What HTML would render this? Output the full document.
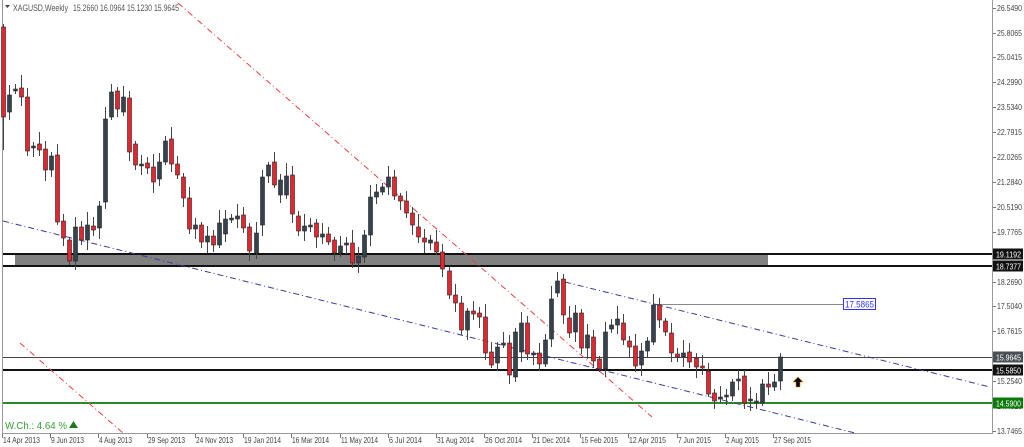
<!DOCTYPE html>
<html><head><meta charset="utf-8"><style>
html,body{margin:0;padding:0;background:#fff;width:1024px;height:447px;overflow:hidden}
svg{display:block;font-family:"Liberation Sans",sans-serif}
</style></head><body>
<svg id="s" width="1024" height="447" viewBox="0 0 1024 447" xmlns="http://www.w3.org/2000/svg">
<rect x="0" y="0" width="1024" height="447" fill="#fff"/>
<line x1="2.5" y1="0" x2="2.5" y2="434" stroke="#999" stroke-width="1"/>
<line x1="992.5" y1="0" x2="992.5" y2="434" stroke="#999" stroke-width="1"/>
<line x1="2" y1="433.5" x2="993" y2="433.5" stroke="#999" stroke-width="1"/>
<rect x="15" y="254" width="753" height="12" fill="#808080"/>
<line x1="3" y1="254" x2="992" y2="254" stroke="#111" stroke-width="2"/>
<line x1="3" y1="266" x2="992" y2="266" stroke="#111" stroke-width="2"/>
<line x1="3" y1="357.5" x2="992" y2="357.5" stroke="#444" stroke-width="1"/>
<line x1="3" y1="370" x2="992" y2="370" stroke="#111" stroke-width="2"/>
<line x1="3" y1="403" x2="992" y2="403" stroke="#2a8a2a" stroke-width="2"/>
<line x1="655" y1="304.5" x2="843" y2="304.5" stroke="#888" stroke-width="1"/>
<line x1="178" y1="3" x2="652" y2="417" stroke="#e84040" stroke-width="1" stroke-dasharray="6,3,1,3"/>
<line x1="20" y1="343" x2="123" y2="433" stroke="#e84040" stroke-width="1" stroke-dasharray="6,3,1,3"/>
<line x1="3" y1="221" x2="855" y2="433" stroke="#3a3aa0" stroke-width="1" stroke-dasharray="6,3,1,3"/>
<line x1="565" y1="282" x2="990" y2="387" stroke="#3a3aa0" stroke-width="1" stroke-dasharray="6,3,1,3"/>
<g id="c"></g>
<rect x="843.5" y="298.5" width="32" height="11" fill="#fff" stroke="#3333ff"/>
<text x="845" y="307.5" font-size="9" fill="#3333ff" textLength="29" lengthAdjust="spacingAndGlyphs">17.5865</text>
<path d="M798 377 L803 382 L800 382 L800 387 L796 387 L796 382 L793 382 Z" fill="#000" stroke="#e08a00" stroke-width="0.6"/>
<path d="M5 5 L10 5 L7.5 8 Z" fill="#444"/>
<text x="13" y="11" font-size="9" fill="#555" textLength="55" lengthAdjust="spacingAndGlyphs">XAGUSD,Weekly</text>
<text x="73" y="11" font-size="9" fill="#555" textLength="106" lengthAdjust="spacingAndGlyphs">15.2660 16.0964 15.1230 15.9645</text>
<text x="5" y="429" font-size="10" fill="#33a033" textLength="62" lengthAdjust="spacingAndGlyphs">W.Ch.: 4.64 %</text>
<path d="M69 428 L73.5 421 L78 428 Z" fill="#1a7a1a"/>
<g id="ax" font-size="8.5" fill="#444"></g>
</svg>
<script>
var NS="http://www.w3.org/2000/svg";
function el(p,t,a,txt){var e=document.createElementNS(NS,t);for(var k in a)e.setAttribute(k,a[k]);if(txt)e.textContent=txt;p.appendChild(e);return e;}
var d=[[3,27,117,24,150],[9,112,95],[15,90,90],[21,88,97],[27,97,151],[33,147,147],[39,144,150],[45,149,170],[51,170,156],[57,155,222],
[63,221,238],[69,240,261],[75,261,227],[81,227,240],[87,240,225],[93,226,230],[99,228,206],[105,202,119],[111,117,92],[117,91,109],
[123,112,97],[129,98,152],[135,144,165],[141,165,165],[147,163,168],[153,167,182],[159,179,162],[165,162,141],[171,139,164],[177,164,175],
[183,177,198],[189,198,229],[195,229,225],[201,225,242],[207,242,236],[213,236,245],[219,245,223],[225,234,219],[231,219,219],[237,219,216],
[243,215,228],[249,227,251],[256,253,233],[262,225,177],[268,176,165],[274,162,185],[280,195,180],[286,195,176],[292,175,214],[298,216,231],
[304,231,226],[310,226,226],[316,223,237],[322,237,234],[328,234,242],[334,240,253],[340,253,246],[346,245,243],[352,243,263],[358,263,256],
[364,257,235],[370,235,197],[376,197,192],[382,192,187],[388,187,177],[394,177,196],[400,196,201],[406,201,213],[412,213,225],[418,227,237],
[424,238,242],[430,243,240],[436,242,252],[442,252,269],[449,271,295],[455,295,303],[461,303,330],[467,330,311],[473,311,314],[479,313,317],
[485,317,353],[491,352,365],[497,363,347],[503,344,344],[509,343,375],[515,377,332],[521,352,323],[527,323,354],[533,354,354],[539,353,364],
[545,364,340],[551,339,299],[557,293,281],[563,279,315],[569,318,333],[575,332,313],[581,313,348],[587,348,335],[593,337,361],[599,359,369],
[605,369,332],[611,329,325],[617,325,319],[623,323,340],[629,341,347],[635,346,366],[641,365,351],[647,351,341],[653,342,305],[659,305,320],
[665,321,332],[671,333,353],[677,354,357],[683,357,353],[689,352,362],[696,358,367],[702,367,368],[708,371,394],[714,393,401],[720,399,397],
[726,396,396],[732,396,382],[738,380,380],[744,376,403],[750,400,400],[756,402,402],[762,403,384],[768,384,387],[774,387,382],[780,381,357]];
var g=document.getElementById("c");
for(var i=0;i<d.length;i++){var c=d[i],x=c[0],o=c[1],cl=c[2];
var t=Math.min(o,cl),b=Math.max(o,cl);var w=3+((i*7)%11);var w2=3+((i*5)%9);
var hi=c.length>3?c[3]:t-w, lo=c.length>3?c[4]:b+w2;
el(g,"line",{x1:x+0.5,y1:hi,x2:x+0.5,y2:lo,stroke:"#444","stroke-width":1});
var bear=cl>o; var h=Math.max(b-t,1);
if(b-t<2){el(g,"rect",{x:x-1.5,y:t-1,width:4,height:2,fill:bear?"#e8242f":"#37424f",stroke:"#222","stroke-width":0.5});}
else el(g,"rect",{x:x-1.5,y:t,width:4,height:h,fill:bear?"#e8242f":"#37424f",stroke:"#222","stroke-width":0.6});}
var ax=document.getElementById("ax");
var lab=[["26.5490",8],["25.8065",33],["25.0415",57],["24.2990",82],["23.5340",107],["22.7915",132],["22.0265",157],["21.2840",182],["20.5190",207],["19.7765",232],["18.2690",282],["17.5040",306],["16.7615",331],["15.2540",381],["14.4915",406],["13.7465",431]];
lab.forEach(function(l){el(ax,"line",{x1:993,y1:l[1]+0.5,x2:996,y2:l[1]+0.5,stroke:"#777"});el(ax,"text",{x:997,y:l[1]+3,textLength:25,lengthAdjust:"spacingAndGlyphs"},l[0]);});
var hl=[["19.1192",254,"#111"],["18.7377",266,"#111"],["15.9645",357,"#4a4f55"],["15.5850",370,"#111"],["14.5900",403,"#0a7a0a"]];
hl.forEach(function(l){el(ax,"rect",{x:993,y:l[1]-5.5,width:30,height:11,fill:l[2]});el(ax,"text",{x:996,y:l[1]+3.5,fill:"#fff",textLength:25,lengthAdjust:"spacingAndGlyphs"},l[0]);});
var dates=[["14 Apr 2013",2],["9 Jun 2013",50],["4 Aug 2013",98],["29 Sep 2013",147],["24 Nov 2013",195],["19 Jan 2014",243],["16 Mar 2014",291],["11 May 2014",340],["6 Jul 2014",388],["31 Aug 2014",436],["26 Oct 2014",484],["21 Dec 2014",532],["15 Feb 2015",580],["12 Apr 2015",628],["7 Jun 2015",677],["2 Aug 2015",725],["27 Sep 2015",773]];
dates.forEach(function(l){el(ax,"line",{x1:l[1]+0.5,y1:434,x2:l[1]+0.5,y2:438,stroke:"#777"});var n=l[0].length;el(ax,"text",{x:l[1]+1,y:443,textLength:(n>=11?37:33),lengthAdjust:"spacingAndGlyphs"},l[0]);});
</script>
</body></html>
